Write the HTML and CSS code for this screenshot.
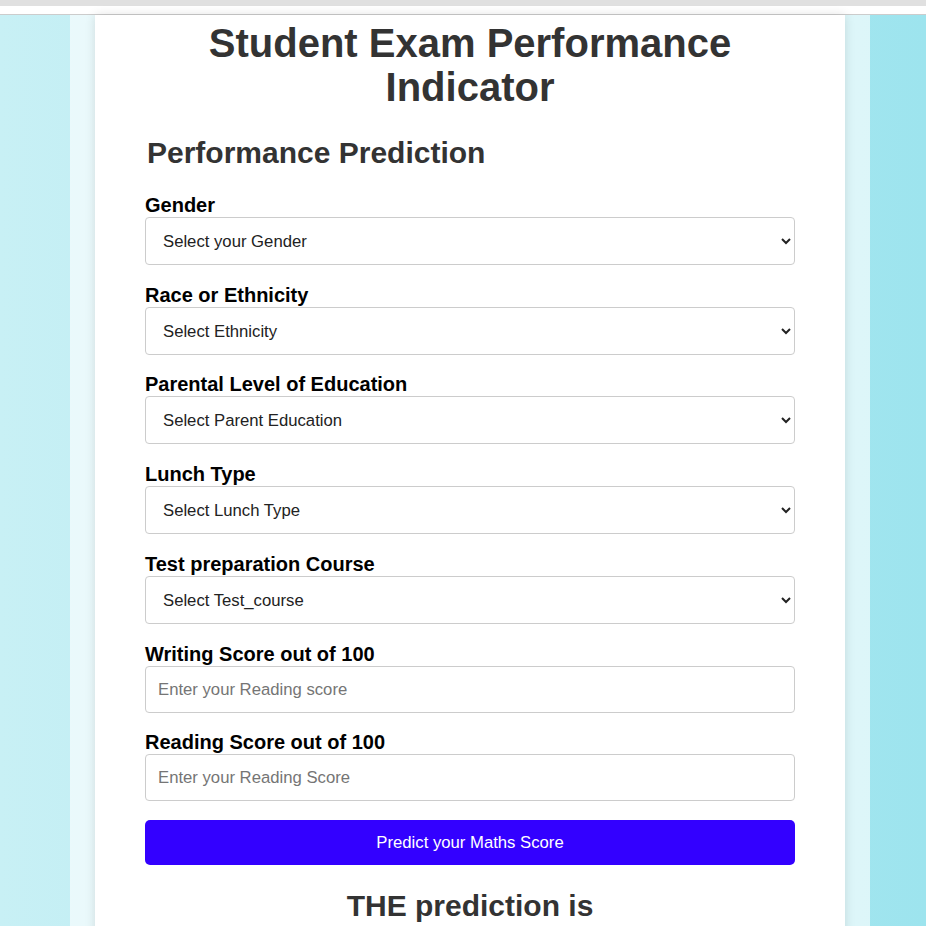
FILE: index.html
```html
<!DOCTYPE html>
<html lang="en">
<head>
<meta charset="utf-8">
<title>Student Exam Performance Indicator</title>
<link rel="stylesheet" href="styles.css">
</head>
<body>
<div class="topbar"></div>
<div class="topgap"></div>
<div class="page">
  <div class="outer">
    <div class="card">
      <h1 class="title">Student Exam Performance Indicator</h1>
      <form class="form">
        <h2 class="legend">Performance Prediction</h2>
        <div class="group">
          <label class="label">Gender</label>
          <select class="control select">
            <option>Select your Gender</option>
          </select>
        </div>
        <div class="group group-tight">
          <label class="label">Race or Ethnicity</label>
          <select class="control select">
            <option>Select Ethnicity</option>
          </select>
        </div>
        <div class="group">
          <label class="label">Parental Level of Education</label>
          <select class="control select">
            <option>Select Parent Education</option>
          </select>
        </div>
        <div class="group">
          <label class="label">Lunch Type</label>
          <select class="control select">
            <option>Select Lunch Type</option>
          </select>
        </div>
        <div class="group">
          <label class="label">Test preparation Course</label>
          <select class="control select">
            <option>Select Test_course</option>
          </select>
        </div>
        <div class="group group-tight">
          <label class="label">Writing Score out of 100</label>
          <input class="control input" type="number" placeholder="Enter your Reading score">
        </div>
        <div class="group">
          <label class="label">Reading Score out of 100</label>
          <input class="control input" type="number" placeholder="Enter your Reading Score">
        </div>
        <button class="btn" type="button">Predict your Maths Score</button>
      </form>
      <h2 class="result">THE prediction is</h2>
    </div>
  </div>
</div>
</body>
</html>
```
FILE: styles.css
```css
html, body {
  margin: 0;
  padding: 0;
}
body {
  font-family: "Liberation Sans", Arial, sans-serif;
  background: #ffffff;
  overflow: hidden;
}
.topbar {
  height: 6px;
  background: #e0e0e0;
}
.topgap {
  height: 8px;
  background: #ffffff;
  border-bottom: 1px solid #cccccc;
}
.page {
  min-height: 960px;
  padding-left: 14px;
  background: linear-gradient(to right, #c8f0f5, #9de4ee);
}
.outer {
  width: 750px;
  margin: 0 auto;
  padding: 0 25px;
  min-height: 960px;
  background: rgba(255, 255, 255, 0.64);
}
.card {
  background: #ffffff;
  min-height: 960px;
  padding: 6px 50px 0;
  box-shadow: 0 0 10px rgba(0, 0, 0, 0.12);
}
.title {
  margin: 0;
  font-size: 40px;
  line-height: 44px;
  font-weight: 700;
  color: #333333;
  text-align: center;
}
.form {
  display: flex;
  flex-direction: column;
}
.legend {
  margin: 26px 0 23px 2px;
  font-size: 30px;
  line-height: 36px;
  font-weight: 700;
  color: #333333;
}
.group {
  display: flex;
  flex-direction: column;
  margin-bottom: 19px;
}
.group-tight {
  margin-bottom: 18px;
}
.label {
  font-size: 20px;
  line-height: 23px;
  font-weight: 700;
  color: #000000;
}
.control {
  box-sizing: border-box;
  width: 100%;
  border: 1px solid #cccccc;
  border-radius: 4px;
  padding: 0 12px;
  font-family: "Liberation Sans", Arial, sans-serif;
  font-size: 16.7px;
  background: #ffffff;
  color: #222222;
}
.select {
  height: 48px;
  padding-left: 13px;
}
.input {
  height: 47px;
}
.input::placeholder {
  color: #757575;
}
.btn {
  height: 45px;
  border: none;
  border-radius: 5px;
  background: #3300ff;
  color: #ffffff;
  font-family: "Liberation Sans", Arial, sans-serif;
  font-size: 16.7px;
}
.result {
  margin: 23px 0 0;
  font-size: 30px;
  line-height: 36px;
  font-weight: 700;
  color: #333333;
  text-align: center;
}
```
